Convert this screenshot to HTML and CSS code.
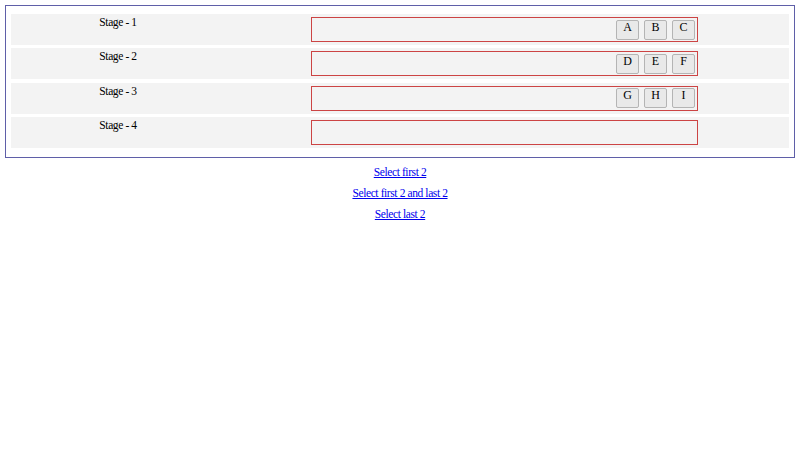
FILE: index.html
```html
<!DOCTYPE html>
<html>
<head>
<meta charset="utf-8">
<link rel="stylesheet" href="styles.css">
</head>
<body>
<div class="board">
  <div class="row">
    <div class="label">Stage - 1</div>
    <div class="zone">
      <button class="chip">A</button><button class="chip">B</button><button class="chip">C</button>
    </div>
  </div>
  <div class="row">
    <div class="label">Stage - 2</div>
    <div class="zone">
      <button class="chip">D</button><button class="chip">E</button><button class="chip">F</button>
    </div>
  </div>
  <div class="row">
    <div class="label">Stage - 3</div>
    <div class="zone">
      <button class="chip">G</button><button class="chip">H</button><button class="chip">I</button>
    </div>
  </div>
  <div class="row">
    <div class="label">Stage - 4</div>
    <div class="zone"></div>
  </div>
</div>
<div class="links">
  <a href="#">Select first 2</a>
  <a href="#">Select first 2 and last 2</a>
  <a href="#">Select last 2</a>
</div>
</body>
</html>
```
FILE: styles.css
```css
html, body {
  margin: 0;
  padding: 0;
  background: #fff;
}
body {
  padding: 5px;
  font-family: "Liberation Serif", "Times New Roman", serif;
  font-size: 11.5px;
  letter-spacing: -0.4px;
  color: #000;
}
.board {
  border: 1px solid #5f5fa8;
  padding: 8px 5px 9px 5px;
  display: flex;
  flex-direction: column;
  gap: 3.4px;
}
.row {
  background: #f3f3f3;
  height: 31px;
  display: grid;
  grid-template-columns: 214px 1fr;
  align-items: start;
}
.label {
  text-align: center;
  padding-top: 2px;
  line-height: 13px;
}
.zone {
  box-sizing: border-box;
  margin-top: 3px;
  margin-left: 86px;
  width: 387px;
  height: 25px;
  border: 1px solid #cc4444;
  display: flex;
  justify-content: flex-end;
  align-items: center;
  gap: 5px;
  padding-right: 2px;
}
.chip {
  width: 23px;
  height: 20px;
  margin: 0;
  padding: 0 0 5px 0;
  font-family: "Liberation Serif", "Times New Roman", serif;
  font-size: 12px;
  line-height: 13px;
  color: #000;
  background: #e9e9e9;
  border: 1px solid #b4b4b4;
  border-radius: 2px;
}
.links {
  display: flex;
  flex-direction: column;
  align-items: center;
  padding-top: 8px;
  gap: 8px;
}
.links a {
  color: #0000ee;
  line-height: 13px;
}
```
